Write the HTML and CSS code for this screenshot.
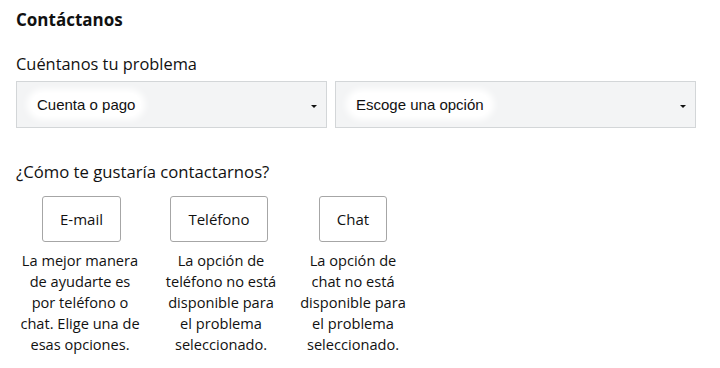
FILE: index.html
```html
<!DOCTYPE html>
<html lang="es">
<head>
  <meta charset="UTF-8">
  <meta name="viewport" content="width=device-width, initial-scale=1.0">
  <link rel="stylesheet" href="styles.css">
</head>
<body>
<div id="contact">
  <h3 class="title">Contáctanos</h3>
  <p class="label">Cuéntanos tu problema</p>
  <div class="selects">
    <div class="select topic">
      <span class="select-text">Cuenta o pago</span>
      <span class="arrow"></span>
    </div>
    <div class="select issue">
      <span class="select-text">Escoge una opción</span>
      <span class="arrow"></span>
    </div>
  </div>

  <p class="label question">¿Cómo te gustaría contactarnos?</p>
  <div class="options">
    <div class="option email">
      <button>E-mail</button>
      <p>La mejor manera de ayudarte es por teléfono o chat. Elige una de esas opciones.</p>
    </div>
    <div class="option phone">
      <button>Teléfono</button>
      <p>La opción de teléfono no está disponible para el problema seleccionado.</p>
    </div>
    <div class="option chat">
      <button>Chat</button>
      <p>La opción de chat no está disponible para el problema seleccionado.</p>
    </div>
  </div>
</div>
</body>
</html>
```

FILE: styles.css
```css
body {
  margin: 0;
  font-family: "Open Sans", sans-serif;
  color: #111;
  background: #fff;
}

#contact {
  width: 680px;
  padding: 8px 16px;
}

.title {
  margin: 0;
  font-size: 17px;
  font-weight: 700;
  line-height: 24px;
}

.label {
  margin: 21px 0 6px;
  font-size: 16.4px;
  line-height: 22px;
}

.selects {
  display: flex;
  gap: 8px;
}

.select {
  display: flex;
  align-items: center;
  justify-content: space-between;
  height: 47px;
  padding: 0 9px 0 14px;
  background: #f3f4f5;
  border: 1px solid #d3d6d8;
  font-family: "Liberation Sans", Arial, sans-serif;
  font-size: 15px;
  box-sizing: border-box;
}

.topic {
  width: 311px;
}

.issue {
  flex: 1;
}

.select-text {
  padding: 3px 6px;
  background: #fff;
  border-radius: 12px;
  box-shadow: 0 0 6px 4px #fff;
}

.arrow {
  width: 0;
  height: 0;
  margin-top: 3px;
  border-left: 3px solid transparent;
  border-right: 3px solid transparent;
  border-top: 3px solid #111;
}

.question {
  margin: 33px 0 13px;
  font-size: 16.7px;
}

.options {
  display: flex;
  gap: 17px;
}

.option {
  display: flex;
  flex-direction: column;
  align-items: center;
  text-align: center;
}

.option button {
  height: 46px;
  padding: 0 17px;
  background: #fff;
  border: 1px solid #a6a6a6;
  border-radius: 3px;
  font-family: "Open Sans", sans-serif;
  font-size: 15px;
  color: #111;
}

.option p {
  margin: 8px 0 0;
  font-size: 14.6px;
  line-height: 21px;
}

.email {
  width: 128px;
}

.email button {
  margin-left: 3px;
}

.phone {
  width: 120px;
}

.phone button {
  margin-right: 4px;
}

.chat {
  width: 110px;
}
```
